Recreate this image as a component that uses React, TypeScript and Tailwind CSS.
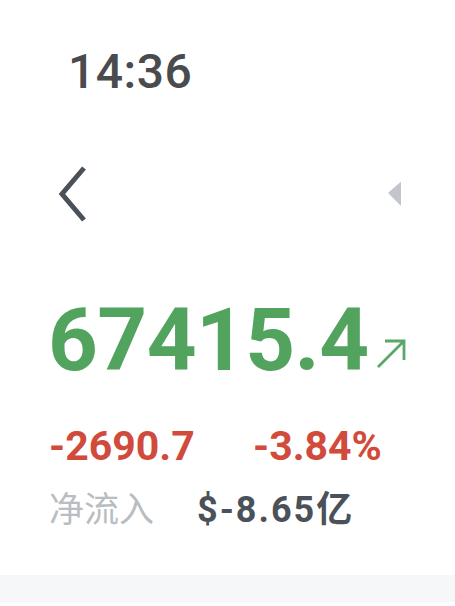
import React from 'react';

const font = { fontFamily: 'Roboto, "Noto Sans CJK SC", sans-serif' };

function BackIcon() {
  return (
    <svg width="30" height="58" viewBox="0 0 30 58" fill="none">
      <path d="M26 3 L4 29 L26 55" stroke="#4b5159" strokeWidth="5" strokeLinejoin="miter" />
    </svg>
  );
}

function TriangleIcon() {
  return (
    <svg width="16" height="28" viewBox="0 0 16 28">
      <path d="M14 1.5 L1 13 L14 26 Z" fill="#c2c6ca" />
    </svg>
  );
}

function UpRightArrow() {
  return (
    <svg width="34" height="36" viewBox="0 0 34 36" fill="none">
      <path d="M4 32 L29 7 M11 6 H30 V25" stroke="#5aa768" strokeWidth="2.8" />
    </svg>
  );
}

export default function App() {
  return (
    <div
      className="w-[455px] h-[606px] bg-white flex flex-col overflow-hidden"
      style={font}
    >
      <div className="pl-[68px] pt-[48px] h-[110px] shrink-0 text-[48px] leading-none font-medium text-[#4a4b4e] tracking-[0.5px]">
        14:36
      </div>

      <div className="flex items-center justify-between pl-[58px] pr-[52px] h-[168px] shrink-0">
        <BackIcon />
        <TriangleIcon />
      </div>

      <div className="flex items-start pl-[48px] pt-[19px] shrink-0">
        <span className="text-[87px] leading-none font-bold text-[#52a35e] tracking-[-0.6px]">
          67415.4
        </span>
        <span className="ml-[5px] mt-[38px]">
          <UpRightArrow />
        </span>
      </div>

      <div className="flex items-center pl-[49px] pt-[42px] shrink-0 text-[41px] leading-none font-bold text-[#d14b3c]">
        <span className="w-[204px]">-2690.7</span>
        <span>-3.84%</span>
      </div>

      <div className="flex items-center pl-[49px] pt-[25px] shrink-0 leading-none">
        <span className="w-[148px] text-[35px] text-[#b9bdc1]">净流入</span>
        <span className="text-[36px] font-bold text-[#4b5159] tracking-[2px]">$-8.65亿</span>
      </div>

      <div className="flex-1" />
      <div className="h-[27px] bg-[#f6f7f8] mb-[4px] shrink-0" />
    </div>
  );
}
